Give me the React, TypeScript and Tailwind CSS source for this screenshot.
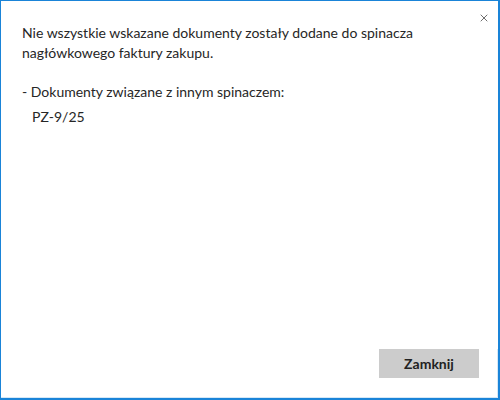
import { X } from 'lucide-react';

export default function App() {
  return (
    <div className="w-[500px] h-[400px] bg-white">
      <div className="relative w-full h-full flex flex-col border-l border-t border-r-2 border-b-2 border-[#1a84d8] font-['Lato',sans-serif] text-[#262626]">
        <button className="absolute top-[10px] right-[7px] w-[14px] h-[14px] flex items-center justify-center text-[#6e6e6e]">
          <X size={12} strokeWidth={2} />
        </button>

        <div className="flex-1 pl-[21px] pr-[30px] pt-[22px] text-[14px] leading-[20px]">
          <p>
            Nie wszystkie wskazane dokumenty zostały dodane do spinacza
            <br />
            nagłówkowego faktury zakupu.
          </p>
          <p className="mt-[19px]">- Dokumenty związane z innym spinaczem:</p>
          <p className="mt-[5px] pl-[10px]">PZ-9/25</p>
        </div>

        <div className="flex justify-end pr-[18px] pb-[19px] border-b border-r border-[#d6e8f6]">
          <button className="w-[100px] h-[29px] bg-[#cccccc] text-[14px] font-bold text-[#222]">
            Zamknij
          </button>
        </div>
      </div>
    </div>
  );
}
